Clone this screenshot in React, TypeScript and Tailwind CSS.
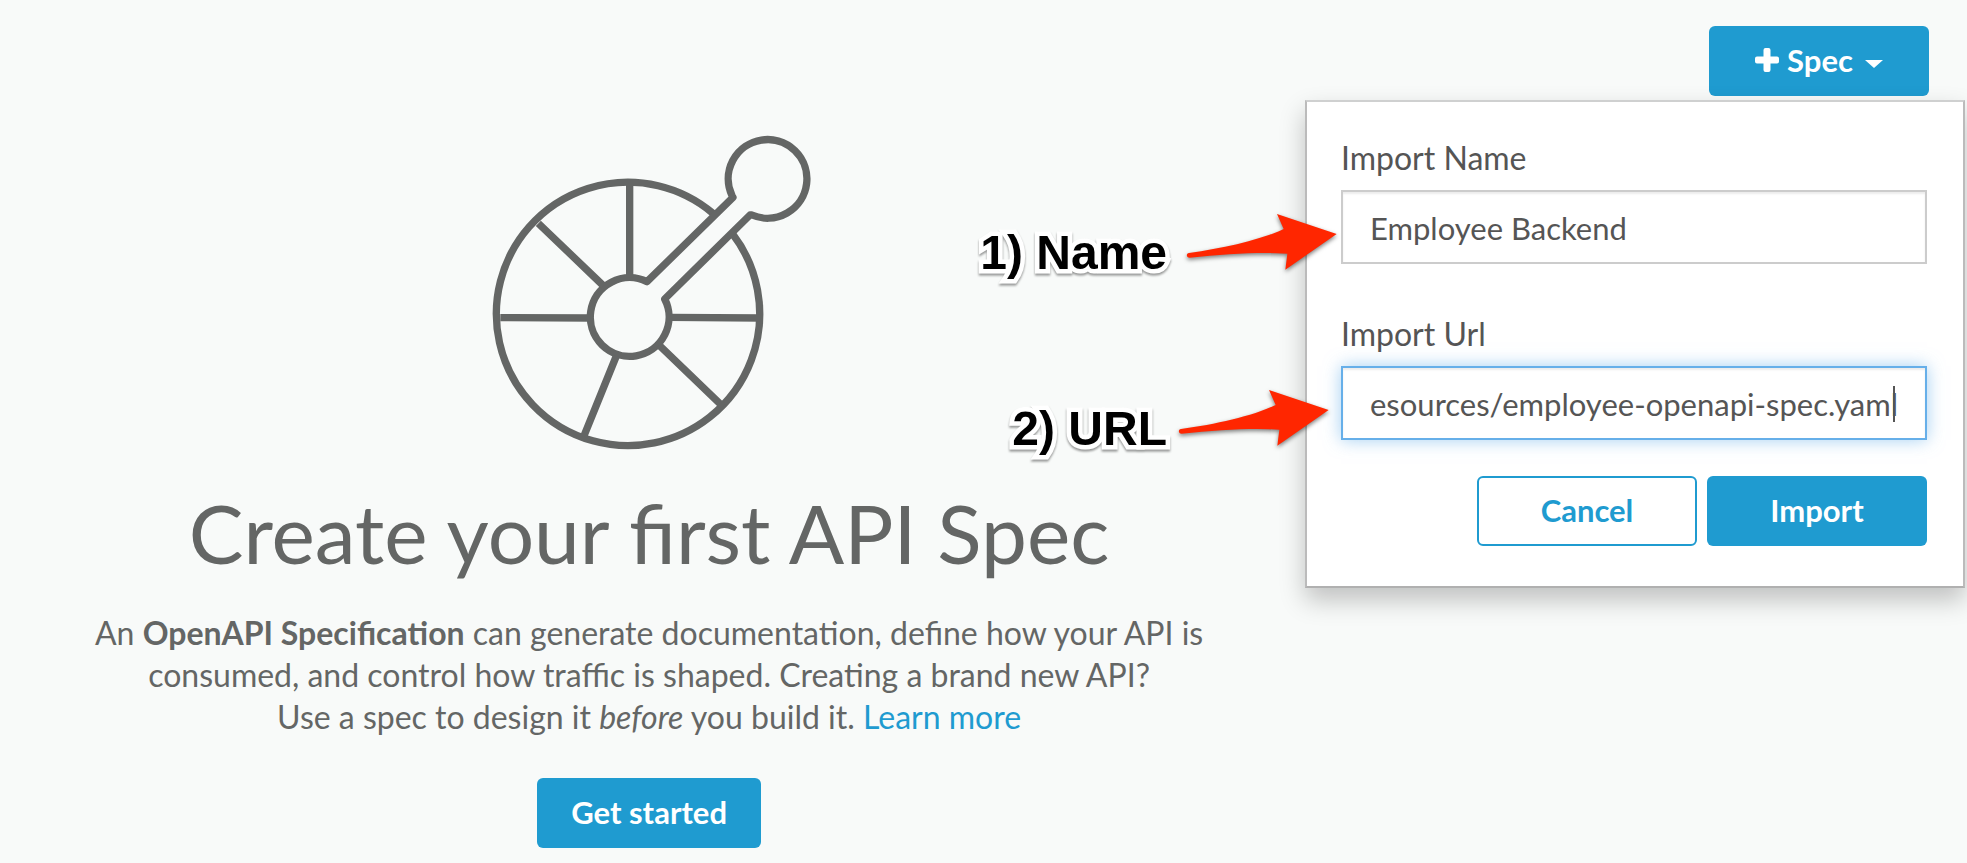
import { useState, type ReactNode } from "react";

function SpecWheelIcon() {
  return (
    <svg
      viewBox="-4 0 1080 1050"
      className="h-[350px] w-[360px]"
      fill="none"
      stroke="#646665"
      strokeWidth="22"
      strokeLinejoin="round"
      aria-hidden="true"
    >
      <path d="M728 310A395 395 0 1 0 787 372" />
      <path d="M530 515L788 262L785 257A118 118 0 1 1 845 315L839 315L583 567A118 118 0 1 1 530 515Z" />
      <path d="M478 222V502M204 340L400 528M90 623L360 624M598 622L870 624M567 706L758 890M438 738L340 980" />
    </svg>
  );
}

function Arrow() {
  return (
    <svg
      viewBox="682 40 450 174"
      className="h-[58px] w-[150px] shrink-0 overflow-visible drop-shadow-[0_2px_2px_rgba(0,0,0,0.5)]"
      aria-hidden="true"
    >
      <path
        fill="#ff2600"
        d="M688 160C790 146 900 122 972 88L952 43L1131 103L977 210L983 162C900 156 800 163 690 174C679 174 679 161 688 160Z"
      />
    </svg>
  );
}

function Callout({ children, className }: { children: ReactNode; className: string }) {
  return (
    <div className={`pointer-events-none absolute right-full top-[23px] flex items-start ${className}`}>
      <span className="mt-4 whitespace-nowrap font-['Liberation_Sans',Arial,sans-serif] text-5xl/[48px] font-bold text-black drop-shadow-[0_2px_1px_rgba(0,0,0,0.4)] [-webkit-text-stroke:9px_white] [paint-order:stroke_fill]">
        {children}
      </span>
      <Arrow />
    </div>
  );
}

const buttonBase = "h-[70px] rounded-md pb-0.5 text-[31px] font-bold";
const primary = "bg-[#1f9bd0] text-white";
const labelBase = "block pb-3 text-[32px]/[40px] text-[#555]";
const fieldBase =
  "block h-[74px] w-full border-2 bg-white px-[27px] pt-0.5 text-[31px] text-[#555] outline-none";

export default function App() {
  const [name, setName] = useState("Employee Backend");
  const [url, setUrl] = useState("esources/employee-openapi-spec.yaml");

  return (
    <div className="min-h-screen bg-[#f8faf9] font-['Lato',sans-serif] text-[#646665]">
      <header className="flex justify-end pr-[38px] pt-[26px]">
        <div className="relative">
          <button
            type="button"
            aria-expanded="true"
            className={`${buttonBase} ${primary} flex w-[220px] items-center justify-center`}
          >
            <svg viewBox="0 0 24 24" className="mr-2 size-6" fill="currentColor" aria-hidden="true">
              <path d="M10.500 0h3a2 2 0 0 1 2 2v6.500H22a2 2 0 0 1 2 2v3a2 2 0 0 1-2 2h-6.500V22a2 2 0 0 1-2 2h-3a2 2 0 0 1-2-2v-6.500H2a2 2 0 0 1-2-2v-3a2 2 0 0 1 2-2h6.500V2a2 2 0 0 1 2-2z" />
            </svg>
            Spec
            <svg viewBox="0 0 18 8" className="ml-3 mt-2 h-2 w-[18px]" fill="currentColor" aria-hidden="true">
              <path d="M0 0h18L9 8z" />
            </svg>
          </button>

          <form
            onSubmit={(e) => e.preventDefault()}
            className="absolute -right-9 top-full mt-1 w-[660px] border-2 border-[#bbb] border-b-[#b0b0b0] border-t-[#cfd0d0] bg-white pb-10 pl-[34px] pr-9 pt-9 shadow-[0_12px_24px_rgba(0,0,0,0.23)]"
          >
            <label htmlFor="import-name" className={labelBase}>
              Import Name
            </label>
            <div className="relative">
              <input
                id="import-name"
                value={name}
                onChange={(e) => setName(e.target.value)}
                className={`${fieldBase} border-[#ccc] shadow-[inset_0_2px_2px_rgba(0,0,0,0.075)]`}
              />
              <Callout className="mr-1 gap-5">1) Name</Callout>
            </div>

            <label htmlFor="import-url" className={`${labelBase} mt-[50px]`}>
              Import Url
            </label>
            <div className="relative">
              <input
                id="import-url"
                value={url}
                onChange={(e) => setUrl(e.target.value)}
                className={`${fieldBase} border-[#66afe9] caret-transparent shadow-[inset_0_2px_2px_rgba(0,0,0,0.075),0_0_16px_rgba(102,175,233,0.6)]`}
              />
              <span className="absolute right-8 top-5 h-9 w-0.5 bg-[#555]" />
              <Callout className="mr-3 gap-3">2) URL</Callout>
            </div>

            <div className="mt-9 flex justify-end gap-2.5">
              <button
                type="button"
                className={`${buttonBase} w-[220px] border-2 border-[#1f9bd0] bg-white text-[#1f9bd0]`}
              >
                Cancel
              </button>
              <button type="submit" className={`${buttonBase} ${primary} w-[220px]`}>
                Import
              </button>
            </div>
          </form>
        </div>
      </header>

      <main className="flex w-[66%] flex-col items-center pb-4 pt-3.5 text-center">
        <SpecWheelIcon />
        <h1 className="mt-6 text-[82px]/[96px]">Create your first API Spec</h1>
        <p className="mt-8 text-[32px]/[42px]">
          An <strong className="font-bold">OpenAPI Specification</strong> can generate documentation, define how your API is
          <br />
          consumed, and control how traffic is shaped. Creating a brand new API?
          <br />
          Use a spec to design it <em>before</em> you build it.{" "}
          <a href="#learn-more" className="text-[#1f9bd0]">
            Learn more
          </a>
        </p>
        <button type="button" className={`${buttonBase} ${primary} mt-10 px-[34px]`}>
          Get started
        </button>
      </main>
    </div>
  );
}
